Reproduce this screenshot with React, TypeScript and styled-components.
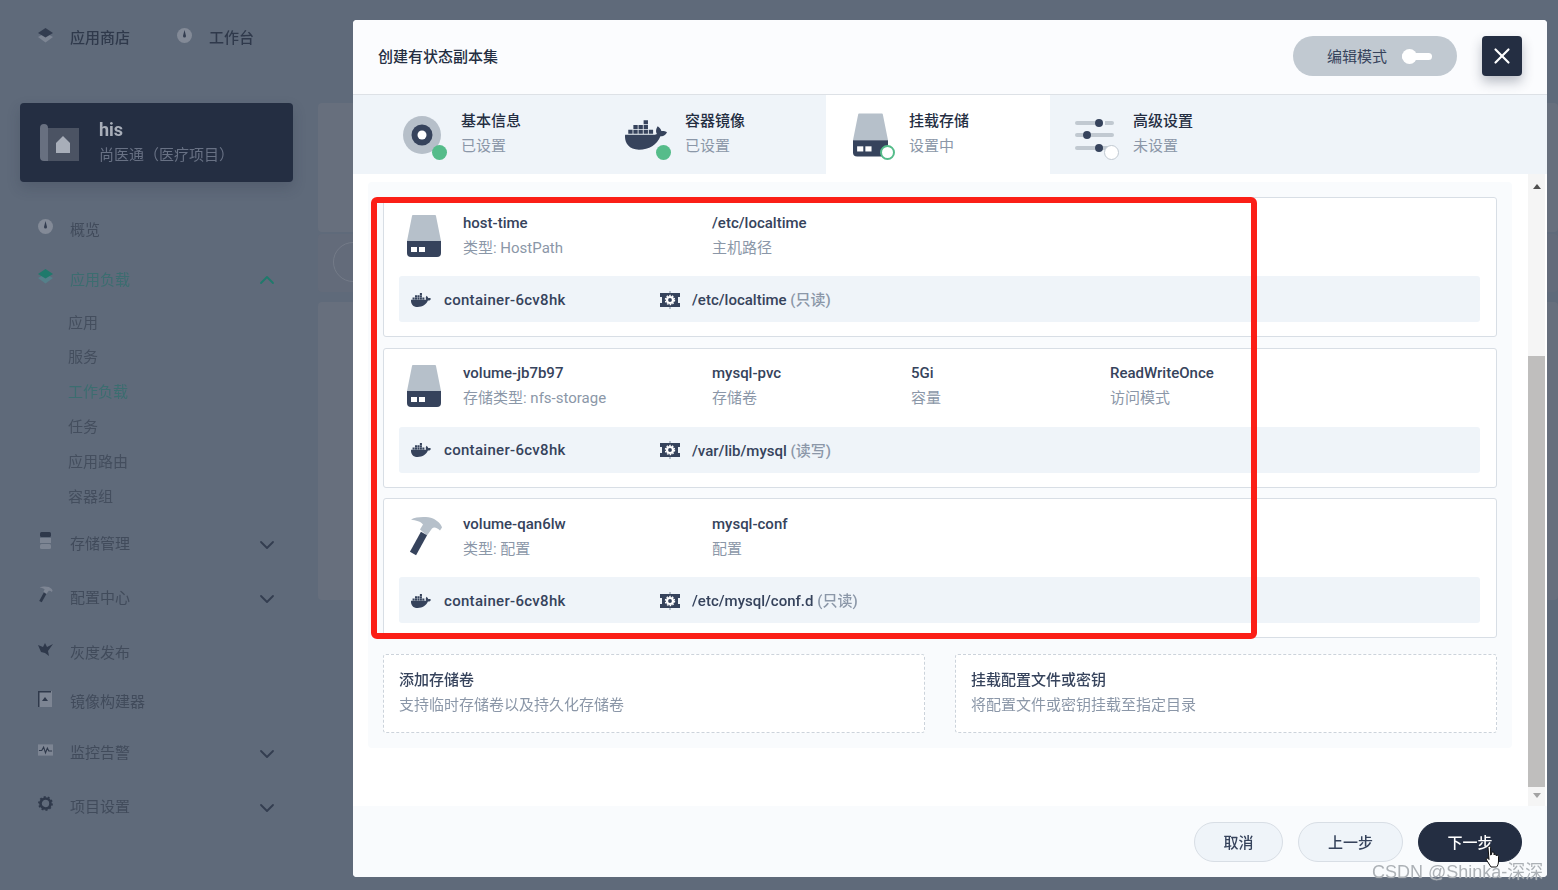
import React from "react";
import styled, { createGlobalStyle } from "styled-components";
import { FaDocker } from "react-icons/fa";
import { ChevronDown, ChevronUp, X } from "lucide-react";

const Global = createGlobalStyle`
  html, body { margin: 0; padding: 0; }
  body { font-family: Roboto, "Noto Sans CJK SC", sans-serif; background: #5f6a7a; }
  * { box-sizing: border-box; }
`;

const Page = styled.div`
  position: relative; width: 1558px; height: 890px; overflow: hidden;
  display: flex; background: #5f6a7a;
`;
const Sidebar = styled.aside`
  width: 318px; flex: none; filter: blur(0.4px); font-size: 15px; color: #404a5a;
`;
const TopNav = styled.div`
  height: 76px; display: flex; align-items: center; padding-left: 38px; gap: 47px;
`;
const TopLink = styled.div`
  display: flex; align-items: center; gap: 17px; color: #2f394b; font-weight: 500; line-height: 20px;
  svg { margin-bottom: 6px; }
`;
const ProjectCard = styled.div`
  margin: 27px 0 26px 20px; width: 273px; height: 79px; background: #242e42; border-radius: 4px;
  box-shadow: 0 6px 14px rgba(36, 46, 66, 0.2);
  display: flex; align-items: center; padding-left: 20px; gap: 20px;
`;
const ProjectText = styled.div`padding-bottom: 2px;`;
const ProjectName = styled.div`font-size: 18px; font-weight: 700; color: #a8aeb9; line-height: 26px;`;
const ProjectSub = styled.div`font-size: 15px; color: #687184; line-height: 24px;`;
const NavRow = styled.div<{ $top?: number; $active?: boolean }>`
  height: 40px; margin-top: ${(p) => p.$top ?? 0}px; padding: 0 39px 0 38px;
  display: flex; align-items: center; gap: 17px;
  color: ${(p) => (p.$active ? "#3c6d70" : "#414b5b")};
  svg.nav { margin-bottom: 4px; flex: none; }
  svg.chev { margin-left: auto; margin-top: 4px; flex: none; }
`;
const SubList = styled.div`margin-top: 7.6px;`;
const SubItem = styled.div<{ $active?: boolean }>`
  height: 34.8px; line-height: 34.8px; padding-left: 68px;
  color: ${(p) => (p.$active ? "#3c6d70" : "#444e5e")};
`;

const BackArea = styled.main`flex: 1; padding-top: 103px; display: flex; flex-direction: column; gap: 2px;`;
const BackPanel = styled.div<{ $h: number; $mt?: number }>`
  height: ${(p) => p.$h}px; margin-top: ${(p) => p.$mt ?? 0}px; background: #676f7d; border-radius: 4px;
`;
const BackPanelAlt = styled(BackPanel)`background: #636b7a; position: relative; overflow: hidden;`;
const BackCircle = styled.span`
  position: absolute; left: 15px; top: 8px; width: 40px; height: 40px; border-radius: 50%;
  border: 1px solid #747b88;
`;

const Modal = styled.section`
  position: absolute; left: 353px; top: 20px; width: 1194px; height: 857px;
  display: flex; flex-direction: column; background: #fff; border-radius: 4px; overflow: hidden;
  filter: blur(0.25px);
`;
const Header = styled.header`
  height: 75px; flex: none; background: #fbfcfe; border-bottom: 1px solid #dde1e6;
  display: flex; align-items: center; padding: 0 25px 2px;
`;
const Title = styled.h1`margin: 0; font-size: 15px; font-weight: 500; color: #242e42; flex: 1; padding-bottom: 2px;`;
const EditMode = styled.div`
  width: 164px; height: 40px; border-radius: 20px; background: #c1c9d1; color: #36435c;
  font-size: 15px; display: flex; align-items: center; padding-left: 34px; gap: 15px; margin-right: 25px;
`;
const EditLabel = styled.span`margin-bottom: 2px;`;
const ToggleTrack = styled.span`
  position: relative; display: block; width: 30px; height: 7px; border-radius: 4px; background: #fff;
  &::before {
    content: ""; position: absolute; left: 0; top: -4px; width: 15px; height: 15px; border-radius: 50%; background: #fff;
  }
`;
const CloseBtn = styled.button`
  width: 40px; height: 40px; padding: 0; border: 0; border-radius: 4px; background: #242e42; color: #fff;
  display: flex; align-items: center; justify-content: center;
  box-shadow: 0 6px 12px rgba(36, 46, 66, 0.3);
`;

const Tabs = styled.nav`
  height: 79px; flex: none; display: flex; padding-left: 25px; background: #eff4f9;
`;
const Tab = styled.div<{ $active?: boolean }>`
  width: 224px; display: flex; align-items: center; padding-left: 22px; gap: 17px;
  background: ${(p) => (p.$active ? "#fff" : "transparent")};
`;
const TabIcon = styled.div`
  position: relative; width: 44px; height: 44px; flex: none;
  display: flex; align-items: center; justify-content: center; color: #36435c;
`;
const Badge = styled.span<{ $kind: "done" | "current" | "todo" }>`
  position: absolute; left: 31.500px; top: 32.500px; width: 15px; height: 15px; border-radius: 50%;
  background: ${(p) => (p.$kind === "done" ? "#55bc8a" : "#fff")};
  border: ${(p) => (p.$kind === "done" ? "0" : p.$kind === "current" ? "2px solid #55bc8a" : "1.5px solid #c1c9d1")};
`;
const TabText = styled.div`line-height: 25px; font-size: 15px; padding-bottom: 2px;`;
const TabTitle = styled.div`font-weight: 500; color: #242e42;`;
const TabSub = styled.div`color: #8b97a8;`;

const Body = styled.div`flex: 1; min-height: 0; display: flex; background: #fff;`;
const Content = styled.div`flex: 1; padding: 8px 16px 0 15px;`;
const Panel = styled.div`
  background: #f9fbfd; border-radius: 4px; padding: 15px; height: 566px;
  display: flex; flex-direction: column; gap: 10.5px;
`;
const VolumeCard = styled.div`
  height: 140px; flex: none; border: 1px solid #d8dee5; border-radius: 3px; background: #fff;
  padding: 0 16px 0 15px;
`;
const VolumeTop = styled.div`
  height: 78px; display: grid; grid-template-columns: 64px 249px 199px 199px 1fr; align-items: center;
  padding-bottom: 2.5px;
`;
const VolumeIcon = styled.div`padding-left: 8px; display: flex; align-items: center;`;
const Cell = styled.div`line-height: 25px;`;
const CellTitle = styled.div`font-size: 15px; font-weight: 500; color: #36435c;`;
const CellSub = styled.div`font-size: 15px; color: #8b97a8;`;
const MountBar = styled.div`
  height: 46px; border-radius: 3px; background: #eff4f9; display: flex; align-items: center;
  padding: 1px 0 0 12px; color: #36435c; font-size: 15px; font-weight: 500;
`;
const ContainerName = styled.div`display: flex; align-items: center; gap: 13px; width: 249px; flex: none; letter-spacing: 0.3px;`;
const MountPath = styled.div`display: flex; align-items: center; gap: 12px;`;
const PathText = styled.span`padding-bottom: 2px;`;
const Muted = styled.span`color: #8b97a8;`;

const AddRow = styled.div`display: grid; grid-template-columns: 1fr 1fr; gap: 30px; margin-top: 5px;`;
const AddCard = styled.div`
  height: 79px; border: 1px dashed #ccd3db; border-radius: 3px; background: #fff; padding: 13px 15px 0;
  line-height: 25px; font-size: 15px;
`;
const AddTitle = styled.div`font-weight: 500; color: #36435c;`;
const AddSub = styled.div`color: #8b97a8;`;

const ScrollTrack = styled.div`
  width: 17px; flex: none; margin-right: 2px; background: #f5f5f5; display: flex; flex-direction: column; align-items: center;
`;
const ScrollArrow = styled.div<{ $up?: boolean; $gap: number; $color: string }>`
  width: 0; height: 0; border-left: 4.5px solid transparent; border-right: 4.5px solid transparent;
  ${(p) => (p.$up ? `border-bottom: 5px solid ${p.$color};` : `border-top: 5px solid ${p.$color};`)}
  margin: ${(p) => p.$gap}px 0;
`;
const ScrollSpace = styled.div`flex: none; height: 157px;`;
const ScrollThumb = styled.div`width: 100%; height: 431px; flex: none; background: #bfbebd;`;

const Footer = styled.footer`
  height: 71px; flex: none; background: #f9fbfd; display: flex; justify-content: flex-end; gap: 15px;
  padding: 16px 25px 0 0;
`;
const Btn = styled.button<{ $w: number; $primary?: boolean }>`
  width: ${(p) => p.$w}px; height: 40px; border-radius: 20px; font: 500 15px Roboto, "Noto Sans CJK SC", sans-serif;
  padding: 0 0 2px;
  border: 1px solid ${(p) => (p.$primary ? "#242e42" : "#d8dee5")};
  background: ${(p) => (p.$primary ? "#242e42" : "#eff4f9")};
  color: ${(p) => (p.$primary ? "#fff" : "#36435c")};
`;

const RedBox = styled.div`
  position: absolute; left: 370.500px; top: 197px; width: 886px; height: 441.500px;
  border: 6px solid #fb1f17; border-radius: 6px; pointer-events: none;
`;
const Watermark = styled.div`
  position: absolute; left: 1372px; top: 861px; font: 18px/22px "Liberation Sans", "Noto Sans CJK SC", sans-serif;
  color: rgba(165, 170, 176, 0.92); white-space: nowrap; text-shadow: 0 0 1px rgba(255, 255, 255, 0.7);
`;
const Cursor = styled.svg`position: absolute; left: 1485px; top: 846px;`;

const Layers = ({ c = "#333d50", l = "#7d8593" }: { c?: string; l?: string }) => (
  <svg className="nav" width="15" height="15" viewBox="0 0 15 15">
    <path d="M0 9 L7.5 5 L15 9 L7.5 14.5Z" fill={l} />
    <path d="M0 5 L7.5 0 L15 5 L7.5 9.5Z" fill={c} />
  </svg>
);
const Dash = () => (
  <svg className="nav" width="15" height="15" viewBox="0 0 15 15">
    <circle cx="7.5" cy="7.5" r="7.5" fill="#838a97" />
    <path d="M7.5 2 L9 8 a1.5 1.5 0 0 1 -3 0Z" fill="#333d50" />
  </svg>
);
const Db = () => (
  <svg className="nav" width="15" height="17" viewBox="0 0 15 17">
    <rect x="2" y="0" width="11" height="5" rx="1.5" fill="#2f394b" />
    <rect x="2" y="6" width="11" height="5" fill="#7d8593" />
    <rect x="2" y="12" width="11" height="5" rx="1.5" fill="#7d8593" />
  </svg>
);
const SmallHammer = () => (
  <svg className="nav" width="15" height="17" viewBox="0 0 36 40">
    <path d="M4 3 C10 0 20 0 26 2 C30 4 34 7 35 11 L33 14 C30 11 27 10 25 12 L20 19 L13 13 L16 8 C14 5 9 4 4 3Z" fill="#7d8593" />
    <path d="M17 17 L6 37" stroke="#2f394b" strokeWidth="7" />
  </svg>
);
const Bird = () => (
  <svg className="nav" width="15" height="15" viewBox="0 0 15 15">
    <path d="M0 3 L5 5 L7 1 L9 5 L15 2 L10 9 L11 14 L7 11 L3 10Z" fill="#2f394b" />
  </svg>
);
const Builder = () => (
  <svg className="nav" width="15" height="16" viewBox="0 0 15 16">
    <rect x="0" y="0" width="14" height="16" fill="#7d8593" />
    <path d="M0 16 V0 H13 V1.5 H1.5 V16Z" fill="#2f394b" />
    <path d="M7 6 L10 10 H4Z" fill="#2f394b" />
  </svg>
);
const Monitor = () => (
  <svg className="nav" width="15" height="12" viewBox="0 0 16 12">
    <rect width="16" height="12" fill="#7d8593" />
    <path d="M1 6.5 H4 L6 3 L8 9 L10 4 L11.5 7 H15" fill="none" stroke="#2f394b" strokeWidth="1.2" />
  </svg>
);
const Gear = () => (
  <svg className="nav" width="15" height="15" viewBox="0 0 15 15">
    <circle cx="7.5" cy="7.5" r="5" fill="none" stroke="#2f394b" strokeWidth="2.6" />
    <circle cx="7.5" cy="7.5" r="6.6" fill="none" stroke="#2f394b" strokeWidth="1.6" strokeDasharray="2 2.15" />
  </svg>
);
const ProjectIcon = () => (
  <svg width="39" height="38" viewBox="0 0 39 38">
    <rect x="8" y="4" width="31" height="33" fill="#4b5363" />
    <path d="M0 4 a4 4 0 0 1 8 0 V30 a4 4 0 0 0 -8 0Z M0 30 a4 4 0 0 1 8 0 V37 H4 a4 4 0 0 1 -4 -4Z" fill="#687080" />
    <path d="M16 29 V19 L23 12 L30 19 V29Z" fill="#a8aeb9" />
  </svg>
);

const Disc = () => (
  <svg width="38" height="38" viewBox="0 0 38 38">
    <circle cx="19" cy="19" r="19" fill="#b6bfc9" />
    <circle cx="19" cy="19" r="10.5" fill="#36435c" />
    <circle cx="19" cy="19" r="4.5" fill="#fff" />
  </svg>
);
const Hdd = ({ w, h }: { w: number; h: number }) => (
  <svg width={w} height={h} viewBox="0 0 34 42">
    <path d="M5 1 a1 1 0 0 1 1 -1 H28 a1 1 0 0 1 1 1 L34 26 H0Z" fill="#b6c0ca" />
    <path d="M0 26 H34 V38 a4 4 0 0 1 -4 4 H4 a4 4 0 0 1 -4 -4Z" fill="#36435c" />
    <rect x="4" y="32" width="6" height="5" fill="#fff" />
    <rect x="12" y="32" width="6" height="5" fill="#fff" />
  </svg>
);
const Hammer = () => (
  <svg width="36" height="41" viewBox="0 0 36 40">
    <path d="M4 3 C10 0 20 0 26 2 C30 4 34 7 35 11 L33 14 C30 11 27 10 25 12 L20 19 L13 13 L16 8 C14 5 9 4 4 3Z" fill="#b6c0ca" />
    <path d="M17 17 L6 37" stroke="#36435c" strokeWidth="7" />
  </svg>
);
const Sliders = () => (
  <svg width="44" height="44" viewBox="-2 0 44 44">
    <g stroke="#c1c9d1" strokeWidth="4" strokeLinecap="round">
      <path d="M3 10 H38" /><path d="M3 22 H38" /><path d="M3 35 H38" />
    </g>
    <path d="M21 10 h10 M9 22 h8 M21 35 h4" stroke="#eff4f9" strokeWidth="5" />
    <circle cx="25" cy="10" r="4" fill="#36435c" /><circle cx="13" cy="22" r="4" fill="#36435c" /><circle cx="25" cy="35" r="4" fill="#36435c" />
  </svg>
);
const MountIcon = () => (
  <svg width="20" height="18" viewBox="0 0 20 18">
    <rect x="0" y="2" width="20" height="14" fill="#36435c" />
    <path d="M0 6 h2 v6 h-2Z M18 6 h2 v6 h-2Z" fill="#eff4f9" />
    <rect x="9" y="0" width="2" height="2" fill="#b6c0ca" />
    <rect x="9" y="16" width="2" height="2" fill="#b6c0ca" />
    <circle cx="10" cy="9" r="3" fill="none" stroke="#fff" strokeWidth="2.2" />
    <circle cx="10" cy="9" r="4.6" fill="none" stroke="#fff" strokeWidth="1.2" strokeDasharray="1.6 1.3" />
  </svg>
);

const Chev = ({ up, color = "#333d50" }: { up?: boolean; color?: string }) =>
  up ? <ChevronUp className="chev" size={24} color={color} strokeWidth={1.8} /> : <ChevronDown className="chev" size={24} color={color} strokeWidth={1.8} />;

type Volume = {
  icon: React.ReactNode;
  cells: [string, string][];
  path: string;
  mode: string;
};
const volumes: Volume[] = [
  {
    icon: <Hdd w={34} h={42} />,
    cells: [["host-time", "类型: HostPath"], ["/etc/localtime", "主机路径"]],
    path: "/etc/localtime",
    mode: "(只读)",
  },
  {
    icon: <Hdd w={34} h={42} />,
    cells: [["volume-jb7b97", "存储类型: nfs-storage"], ["mysql-pvc", "存储卷"], ["5Gi", "容量"], ["ReadWriteOnce", "访问模式"]],
    path: "/var/lib/mysql",
    mode: "(读写)",
  },
  {
    icon: <Hammer />,
    cells: [["volume-qan6lw", "类型: 配置"], ["mysql-conf", "配置"]],
    path: "/etc/mysql/conf.d",
    mode: "(只读)",
  },
];

const steps = [
  { title: "基本信息", sub: "已设置", icon: <Disc />, kind: "done" as const },
  { title: "容器镜像", sub: "已设置", icon: <FaDocker size={42} />, kind: "done" as const },
  { title: "挂载存储", sub: "设置中", icon: <Hdd w={35} h={44} />, kind: "current" as const, active: true },
  { title: "高级设置", sub: "未设置", icon: <Sliders />, kind: "todo" as const },
];

export default function App() {
  return (
    <Page>
      <Global />
      <Sidebar>
        <TopNav>
          <TopLink><Layers />应用商店</TopLink>
          <TopLink><Dash />工作台</TopLink>
        </TopNav>
        <ProjectCard>
          <ProjectIcon />
          <ProjectText>
            <ProjectName>his</ProjectName>
            <ProjectSub>尚医通（医疗项目）</ProjectSub>
          </ProjectText>
        </ProjectCard>
        <NavRow><Dash />概览</NavRow>
        <NavRow $top={10} $active><Layers c="#1f7a6c" l="#55808a" />应用负载<Chev up color="#1f7a6c" /></NavRow>
        <SubList>
          <SubItem>应用</SubItem>
          <SubItem>服务</SubItem>
          <SubItem $active>工作负载</SubItem>
          <SubItem>任务</SubItem>
          <SubItem>应用路由</SubItem>
          <SubItem>容器组</SubItem>
        </SubList>
        <NavRow $top={8.6}><Db />存储管理<Chev /></NavRow>
        <NavRow $top={14}><SmallHammer />配置中心<Chev /></NavRow>
        <NavRow $top={15}><Bird />灰度发布</NavRow>
        <NavRow $top={9}><Builder />镜像构建器</NavRow>
        <NavRow $top={11}><Monitor />监控告警<Chev /></NavRow>
        <NavRow $top={14}><Gear />项目设置<Chev /></NavRow>
      </Sidebar>
      <BackArea>
        <BackPanel $h={129} />
        <BackPanelAlt $h={58}><BackCircle /></BackPanelAlt>
        <BackPanel $h={298} $mt={8} />
      </BackArea>
      <Modal>
        <Header>
          <Title>创建有状态副本集</Title>
          <EditMode><EditLabel>编辑模式</EditLabel><ToggleTrack /></EditMode>
          <CloseBtn aria-label="关闭"><X size={26} strokeWidth={2} /></CloseBtn>
        </Header>
        <Tabs>
          {steps.map((s) => (
            <Tab key={s.title} $active={s.active}>
              <TabIcon>{s.icon}<Badge $kind={s.kind} /></TabIcon>
              <TabText>
                <TabTitle>{s.title}</TabTitle>
                <TabSub>{s.sub}</TabSub>
              </TabText>
            </Tab>
          ))}
        </Tabs>
        <Body>
          <Content>
            <Panel>
              {volumes.map((v) => (
                <VolumeCard key={v.cells[0][0]}>
                  <VolumeTop>
                    <VolumeIcon>{v.icon}</VolumeIcon>
                    {v.cells.map(([t, s]) => (
                      <Cell key={t}>
                        <CellTitle>{t}</CellTitle>
                        <CellSub>{s}</CellSub>
                      </Cell>
                    ))}
                  </VolumeTop>
                  <MountBar>
                    <ContainerName><FaDocker size={20} />container-6cv8hk</ContainerName>
                    <MountPath><MountIcon /><PathText>{v.path} <Muted>{v.mode}</Muted></PathText></MountPath>
                  </MountBar>
                </VolumeCard>
              ))}
              <AddRow>
                <AddCard>
                  <AddTitle>添加存储卷</AddTitle>
                  <AddSub>支持临时存储卷以及持久化存储卷</AddSub>
                </AddCard>
                <AddCard>
                  <AddTitle>挂载配置文件或密钥</AddTitle>
                  <AddSub>将配置文件或密钥挂载至指定目录</AddSub>
                </AddCard>
              </AddRow>
            </Panel>
          </Content>
          <ScrollTrack>
            <ScrollArrow $up $gap={10} $color="#505050" />
            <ScrollSpace />
            <ScrollThumb />
            <ScrollArrow $gap={6} $color="#a3a3a3" />
          </ScrollTrack>
        </Body>
        <Footer>
          <Btn $w={89}>取消</Btn>
          <Btn $w={105}>上一步</Btn>
          <Btn $w={104} $primary>下一步</Btn>
        </Footer>
      </Modal>
      <RedBox />
      <Cursor width="16" height="22" viewBox="0 0 16 22">
        <path d="M3 1.5 a1.3 1.3 0 0 1 2.6 0 V9 l1 -.5 V7 a1.2 1.2 0 0 1 2.4 .2 V9 a1.2 1.2 0 0 1 2.2 .2 V10 a1.2 1.2 0 0 1 2.3 .3 V15 c0 3 -1 5 -2 6 H6 L1.5 14 c-1 -1.500 .5 -2.500 1.500 -1.500 l1 1Z" fill="#fff" stroke="#111" strokeWidth="1" />
      </Cursor>
      <Watermark>CSDN @Shinka-深深</Watermark>
    </Page>
  );
}
